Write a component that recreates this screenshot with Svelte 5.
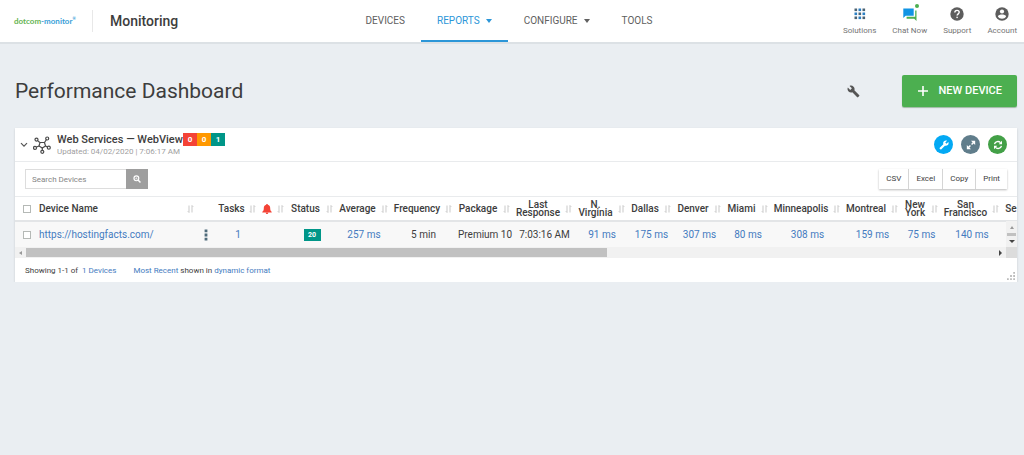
<script>
  const columns = [
    { label: 'Tasks', width: 43, value: '1', link: true },
    { label: 'Alerts', width: 28, bell: true, value: '' },
    { label: 'Status', width: 49, value: '20', badge: true },
    { label: 'Average', width: 55, value: '257 ms', link: true },
    { label: 'Frequency', width: 64, value: '5 min' },
    { label: 'Package', width: 58, value: 'Premium 10' },
    { label: 'Last Response', width: 62, value: '7:03:16 AM' },
    { label: 'N. Virginia', width: 53, value: '91 ms', link: true },
    { label: 'Dallas', width: 46, value: '175 ms', link: true },
    { label: 'Denver', width: 50, value: '307 ms', link: true },
    { label: 'Miami', width: 47, value: '80 ms', link: true },
    { label: 'Minneapolis', width: 72, value: '308 ms', link: true },
    { label: 'Montreal', width: 58, value: '159 ms', link: true },
    { label: 'New York', width: 40, value: '75 ms', link: true },
    { label: 'San Francisco', width: 61, value: '140 ms', link: true },
    { label: 'Se', width: 30, value: '' }
  ];
  const exportActions = ['CSV', 'Excel', 'Copy', 'Print'];
  const dots = [0, 4, 8];
</script>

{#snippet sort()}
  <svg class="sort" viewBox="0 0 7 8" aria-hidden="true">
    <path d="M2 0.5v7M0.8 6.2L2 7.5M5 7.5v-7M5 0.5l1.2 1.3" />
  </svg>
{/snippet}

<header>
  <div class="brand">
    <a class="logo" href="#home"><span>dotcom</span>-monitor<sup>®</sup></a>
    <span class="product">Monitoring</span>
  </div>
  <nav>
    <a href="#devices">DEVICES</a>
    <a href="#reports" class="active">REPORTS <i></i></a>
    <a href="#configure">CONFIGURE <i></i></a>
    <a href="#tools">TOOLS</a>
  </nav>
  <div class="utilities">
    <a href="#solutions">
      <svg viewBox="0 0 14 14">
        {#each dots as y}
          {#each dots as x}
            <rect x={x + 1.5} y={y + 1.5} width="2.6" height="2.6" fill={(x + y) % 8 ? '#2a7fc4' : '#4b6272'} />
          {/each}
        {/each}
      </svg>
      Solutions
    </a>
    <a href="#chat">
      <span class="chat">
        <svg viewBox="0 0 14 14">
          <path d="M12.2 3.5h1.3V14l-2.3-2.3H3.6v-1.9h8.6z" fill="#4caf50" />
          <path d="M0.3 1.5h10.4v7.2H2.6L0.3 11z" fill="#1094e4" />
        </svg>
        <b></b>
      </span>
      Chat Now
    </a>
    <a href="#support">
      <svg viewBox="0 0 14 14">
        <circle cx="7" cy="7" r="6.7" fill="#5d5d5d" />
        <path d="M4.8 5.6C4.8 4.2 5.7 3.4 7 3.4s2.2.8 2.2 1.9C9.2 6.8 7.1 6.9 7.1 8.6" fill="none" stroke="#fff" stroke-width="1.4" />
        <rect x="6.4" y="9.7" width="1.4" height="1.4" fill="#fff" />
      </svg>
      Support
    </a>
    <a href="#account">
      <svg viewBox="0 0 14 14">
        <circle cx="7" cy="7" r="6.7" fill="#5d5d5d" />
        <circle cx="7" cy="4.5" r="2.1" fill="#fff" />
        <path d="M2.9 9.5C3 8 5.5 7.5 7 7.5s4 .5 4.1 2C10.2 11 8.7 11.7 7 11.7S3.8 11 2.9 9.5z" fill="#fff" />
      </svg>
      Account
    </a>
  </div>
</header>

<main>
  <div class="title">
    <h1>Performance Dashboard</h1>
    <button class="settings" aria-label="Dashboard settings">
      <svg viewBox="0 0 24 24"><path fill="#555" d="M22.7 19l-9.1-9.1c.9-2.3.4-5-1.5-6.9-2-2-5-2.4-7.4-1.3L9 6 6 9 1.6 4.7C.4 7.1.9 10.1 2.9 12.1c1.9 1.9 4.6 2.4 6.9 1.5l9.1 9.1c.4.4 1 .4 1.4 0l2.3-2.3c.5-.4.5-1.1.1-1.4z" /></svg>
    </button>
    <button class="new">
      <svg viewBox="0 0 12 12"><path d="M6 1v10M1 6h10" stroke="#fff" stroke-width="1.6" /></svg>
      NEW DEVICE
    </button>
  </div>

  <section class="card">
    <div class="group">
      <button class="collapse" aria-label="Collapse group">
        <svg viewBox="0 0 8 6"><path d="M1 1.2l3 3 3-3" fill="none" stroke="#555" stroke-width="1.2" /></svg>
      </button>
      <svg class="network" viewBox="0 0 18 18" fill="none" stroke="#4a4a4a" stroke-width="1.2">
        <path d="M7 6.5h4.5l1 3.5-3.2 2L6 10z" />
        <path d="M6.8 6.5L4.6 4.6M11.5 6.5l2-3M12.5 10l2 1M9.3 12v2.5M6 10l-3 1.2" />
        <circle cx="3.5" cy="3.6" r="1.5" /><circle cx="14.2" cy="2.5" r="1.5" />
        <circle cx="15.8" cy="11.7" r="1.5" /><circle cx="9.3" cy="15.8" r="1.5" /><circle cx="2" cy="11.9" r="1.5" />
      </svg>
      <div class="group-text">
        <div class="group-name">
          <h2>Web Services — WebView</h2>
          <span class="count red">0</span><span class="count orange">0</span><span class="count teal">1</span>
        </div>
        <p>Updated: 04/02/2020 | 7:06:17 AM</p>
      </div>
      <div class="round-buttons">
        <button class="blue" aria-label="Configure">
          <svg viewBox="0 0 24 24"><path transform="matrix(-1 0 0 1 24 0)" fill="#fff" d="M22.7 19l-9.1-9.1c.9-2.3.4-5-1.5-6.9-2-2-5-2.4-7.4-1.3L9 6 6 9 1.6 4.7C.4 7.1.9 10.1 2.9 12.1c1.9 1.9 4.6 2.4 6.9 1.5l9.1 9.1c.4.4 1 .4 1.4 0l2.3-2.3c.5-.4.5-1.1.1-1.4z" /></svg>
        </button>
        <button class="slate" aria-label="Expand">
          <svg viewBox="0 0 12 12"><path d="M3 9l2.3-2.3M6.7 5.3L9 3" stroke="#fff" stroke-width="1.8" /><path d="M6 1h5v5zM1 6v5h5z" fill="#fff" /></svg>
        </button>
        <button class="green" aria-label="Refresh">
          <svg viewBox="0 0 12 12"><path d="M1.8 5A4.2 4.2 0 0 1 9 3.2M10.2 7A4.2 4.2 0 0 1 3 8.8" fill="none" stroke="#fff" stroke-width="1.6" /><path d="M10.8 1v4h-4zM1.2 11V7h4z" fill="#fff" /></svg>
        </button>
      </div>
    </div>

    <div class="toolbar">
      <div class="search">
        <input type="text" placeholder="Search Devices" aria-label="Search Devices" />
        <button aria-label="Search">
          <svg viewBox="0 0 10 10"><circle cx="4.2" cy="4.2" r="3" fill="none" stroke="#fff" stroke-width="1.5" /><path d="M6.3 6.3L9.3 9.3" stroke="#fff" stroke-width="1.8" /><path d="M2.8 4.2h2.8M4.2 2.8v2.8" stroke="#fff" stroke-width=".7" /></svg>
        </button>
      </div>
      <div class="exports">
        {#each exportActions as action}<button>{action}</button>{/each}
      </div>
    </div>

    <div class="viewport">
      <table>
        <colgroup>
          <col style:width="21px" /><col style:width="159px" /><col style:width="19px" />
          {#each columns as c}<col style:width="{c.width}px" />{/each}
        </colgroup>
        <thead>
          <tr>
            <th class="check"><input type="checkbox" aria-label="Select all" /></th>
            <th class="name"><div><span>Device Name</span>{@render sort()}</div></th>
            <th></th>
            {#each columns as c}
              <th>
                <div>
                  <span>
                    {#if c.bell}
                      <svg class="bell" viewBox="0 0 10 10" role="img" aria-label="Alerts"><path fill="#f44336" d="M4.3 0h1.4v.8C7.6 1.2 8.2 2.6 8.2 4.2c0 2 .5 2.8 1.5 3.6v.6H.3v-.6c1-.8 1.5-1.6 1.5-3.6C1.8 2.6 2.4 1.2 4.3.8zM3.7 8.8h2.6C6.2 9.6 5.7 10 5 10s-1.2-.4-1.3-1.2z" /></svg>
                    {:else}{c.label}{/if}
                  </span>
                  {@render sort()}
                </div>
              </th>
            {/each}
          </tr>
        </thead>
        <tbody>
          <tr>
            <td class="check"><input type="checkbox" aria-label="Select device" /></td>
            <td class="name"><a href="#device">https://hostingfacts.com/</a></td>
            <td class="more">
              <button aria-label="Device menu"><svg viewBox="0 0 4 12"><path d="M.6.5h2.8v2.8H.6zM.6 4.6h2.8v2.8H.6zM.6 8.7h2.8v2.8H.6z" fill="#4f6b7b" /></svg></button>
            </td>
            {#each columns as c}
              <td>
                {#if c.badge}<span class="badge">{c.value}</span>
                {:else if c.link}<a href="#report">{c.value}</a>
                {:else}{c.value}{/if}
              </td>
            {/each}
          </tr>
        </tbody>
      </table>
      <div class="vscroll"><i class="up"></i><b></b><i class="down"></i></div>
    </div>
    <div class="hscroll">
      <i class="left"></i>
      <div class="track"><b></b></div>
      <i class="right"></i>
      <span></span>
    </div>
    <footer>
      <p>Showing 1-1 of <a class="total" href="#devices">1 Devices</a></p>
      <p><a href="#recent">Most Recent</a> shown in <a href="#format">dynamic format</a></p>
      <svg class="grip" viewBox="0 0 9 9"><path d="M7 0h2v2H7zM7 3.5h2v2H7zM7 7h2v2H7zM3.5 3.5h2v2h-2zM3.5 7h2v2h-2zM0 7h2v2H0z" fill="#bbb" /></svg>
    </footer>
  </section>
</main>

<style>
  :global(body) {
    background: #eaeef2;
    color: #3d3d3d;
    font: 10px/12px Roboto, sans-serif;
  }
  :global(*) { box-sizing: border-box; }
  a { color: #447bc0; text-decoration: none; }
  svg { display: block; }
  button { font: inherit; color: inherit; border: 0; padding: 0; background: none; cursor: pointer; }
  h1, h2, p { margin: 0; }

  header {
    display: grid;
    grid-template-columns: 1fr auto 1fr;
    background: #fff;
    border-bottom: 2px solid #dce1e5;
    height: 44px;
  }
  .brand { display: flex; align-items: center; padding-left: 14px; }
  .logo {
    width: 79px;
    border-right: 1px solid #e8e8e8;
    font: 700 8px/22px Lato, sans-serif;
    color: #39a0d8;
    white-space: nowrap;
  }
  .logo span { color: #66b452; }
  .logo sup { font-size: 4px; line-height: 0; }
  .product { padding-left: 17px; font-size: 14px; font-weight: 500; line-height: 20px; }
  nav { display: flex; margin-right: 6px; }
  nav a {
    display: flex;
    align-items: center;
    gap: 6px;
    padding: 2px 16px 0;
    color: #606060;
    border-bottom: 2px solid transparent;
  }
  nav a.active { color: #2c96d8; border-color: #2c96d8; }
  nav i {
    border: 3px solid transparent;
    border-top: 4px solid currentColor;
    border-bottom: 0;
  }
  .utilities {
    display: flex;
    justify-content: flex-end;
    gap: 16px;
    padding: 7px 7px 0 0;
  }
  .utilities a {
    display: flex;
    flex-direction: column;
    align-items: center;
    gap: 4px;
    color: #757575;
    font-size: 8px;
  }
  .utilities svg { width: 14px; height: 14px; }
  .chat { position: relative; }
  .chat b {
    position: absolute;
    top: -3px;
    right: -2px;
    width: 4px;
    height: 4px;
    border-radius: 50%;
    background: #4caf50;
  }

  main { padding: 31px 7px 0 15px; }
  .title { display: flex; align-items: center; margin-bottom: 21px; }
  h1 { flex: 1; font-size: 21px; line-height: 28px; font-weight: 400; }
  .settings { margin-right: 42px; }
  .settings svg { width: 13px; height: 13px; }
  .new {
    display: flex;
    align-items: center;
    gap: 10px;
    height: 32px;
    padding: 0 15px;
    border-radius: 2px;
    background: #4caf50;
    box-shadow: 0 1px 1px #9fb8a4;
    color: #fff;
    font-size: 11px;
    font-weight: 500;
  }
  .new svg { width: 12px; height: 12px; }

  .card { background: #fff; box-shadow: 0 1px 2px #c5cacd; }
  .group {
    display: flex;
    align-items: center;
    height: 34px;
    padding: 0 10px 0 5px;
    border-bottom: 1px solid #e9ebed;
  }
  .collapse svg { width: 8px; height: 6px; }
  .network { width: 18px; height: 18px; margin: 0 6px 0 5px; }
  .group-text { flex: 1; padding-top: 2px; }
  .group-name { display: flex; }
  h2 { font-size: 11px; line-height: 13px; font-weight: 500; }
  .count {
    width: 14px;
    color: #fff;
    font-size: 8px;
    font-weight: 700;
    line-height: 13px;
    text-align: center;
  }
  .red { background: #f44336; }
  .orange { background: #ff9800; }
  .teal { background: #009688; }
  .group p { color: #a0a0a0; font-size: 8px; }
  .round-buttons { display: flex; gap: 8px; }
  .round-buttons button {
    display: grid;
    place-items: center;
    width: 19px;
    height: 19px;
    border-radius: 50%;
  }
  .round-buttons svg { width: 10px; height: 10px; }
  .round-buttons .blue { background: #03a9f4; }
  .round-buttons .slate { background: #607d8b; }
  .round-buttons .green { background: #43a047; }

  .toolbar {
    display: flex;
    justify-content: space-between;
    align-items: center;
    height: 35px;
    padding: 0 10px;
    border-bottom: 1px solid #e9ebed;
  }
  .search { display: flex; }
  .search input {
    width: 101px;
    height: 20px;
    padding: 0 6px;
    border: 1px solid #ddd;
    border-right: 0;
    border-radius: 0;
    font: 8px/12px Roboto, sans-serif;
  }
  .search input::placeholder { color: #858585; }
  .search button { display: grid; place-items: center; width: 22px; height: 20px; background: #9e9e9e; }
  .search svg { width: 8px; height: 8px; }
  .exports { display: flex; box-shadow: 0 1px 2px #bbb; }
  .exports button { height: 20px; padding: 0 7px; font-size: 8px; }
  .exports button + button { border-left: 1px solid #d5d5d5; }

  .viewport { position: relative; overflow: hidden; }
  table { width: 1014px; table-layout: fixed; border-collapse: collapse; }
  thead tr { height: 24px; border-bottom: 2px solid #e3e5e7; }
  tbody tr { height: 26px; background: #f8f8f8; }
  th { padding: 0; font-weight: 500; line-height: 8px; }
  th div { display: flex; align-items: center; padding-right: 1px; }
  th span { flex: 1; display: flex; justify-content: center; text-align: center; }
  th.name { padding-left: 3px; }
  th.name span { justify-content: flex-start; }
  .sort { width: 7px; height: 8px; fill: none; stroke: #c9c9c9; }
  .bell { width: 10px; height: 10px; }
  td { padding: 0 0 0 5px; text-align: center; white-space: nowrap; }
  td.name { padding: 0 0 0 3px; text-align: left; }
  .check { padding: 0 0 0 8px; text-align: left; }
  .check input {
    display: block;
    appearance: none;
    width: 8px;
    height: 8px;
    margin: 0;
    border: 1px solid #b5b9b6;
    background: #fff;
  }
  td.more { padding: 0 0 0 9px; }
  .more button { display: block; }
  .more svg { width: 4px; height: 12px; }
  .badge {
    display: inline-block;
    width: 17px;
    background: #009688;
    color: #fff;
    font-size: 7px;
    font-weight: 700;
    line-height: 12px;
  }

  .vscroll {
    position: absolute;
    right: 0;
    bottom: 0;
    width: 11px;
    height: 26px;
    display: flex;
    flex-direction: column;
    align-items: center;
    justify-content: center;
    gap: 4px;
    background: #f1f1f1;
  }
  .vscroll b { width: 9px; height: 3px; background: #c1c1c1; }
  .up { border: 2px solid transparent; border-top: 0; border-bottom: 3px solid #999; }
  .down { border: 3px solid transparent; border-bottom: 0; border-top: 3px solid #444; }
  .hscroll { display: flex; align-items: center; height: 11px; background: #f1f1f1; }
  .hscroll span { width: 11px; height: 11px; background: #dcdcdc; }
  .track { flex: 1; height: 9px; margin: 0 4px; }
  .track b { display: block; width: 60%; height: 9px; background: #c1c1c1; }
  .left { margin-left: 4px; border: 2px solid transparent; border-left: 0; border-right: 3px solid #999; }
  .right { margin-right: 4px; border: 3px solid transparent; border-right: 0; border-left: 3px solid #444; }

  footer {
    display: flex;
    align-items: center;
    gap: 17px;
    height: 24px;
    padding: 1px 2px 0 10px;
    font-size: 8px;
  }
  .total { margin-left: 2px; }
  .grip { width: 8px; height: 8px; margin: auto 0 2px auto; }
</style>
